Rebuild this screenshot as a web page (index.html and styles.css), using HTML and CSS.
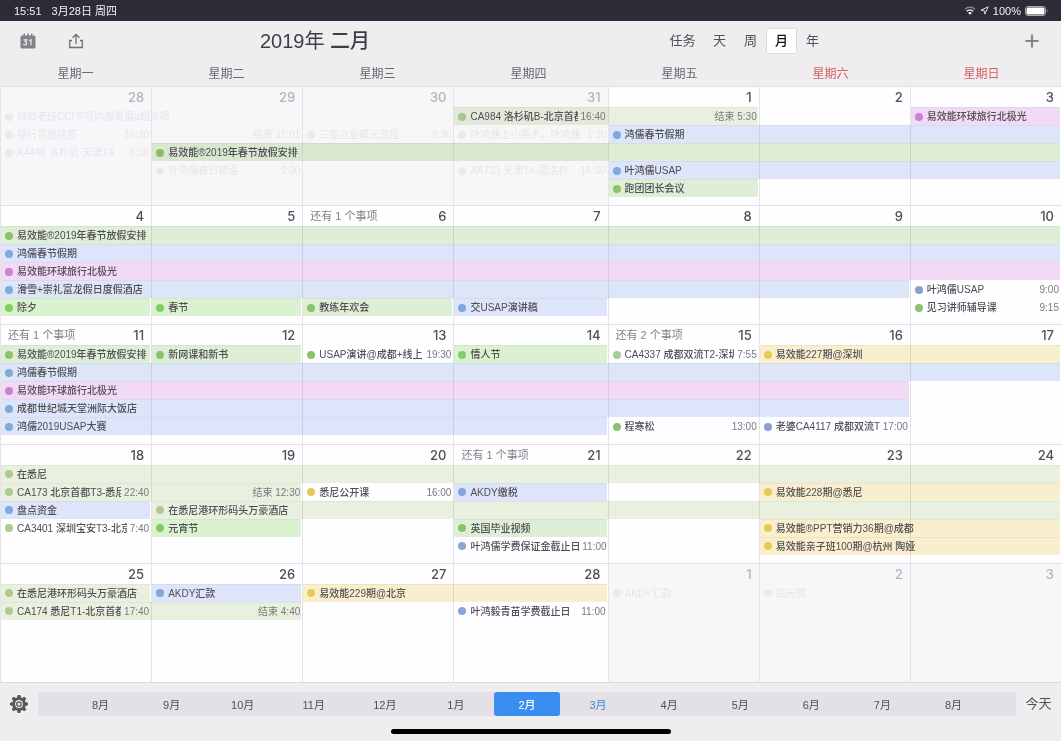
FILE: index.html
```html
<!DOCTYPE html>
<html lang="zh-CN">
<head>
<meta charset="utf-8">
<title>2019年 二月</title>
<meta name="viewport" content="width=device-width, initial-scale=1">
<link rel="stylesheet" href="styles.css">
</head>
<body>
<div class="status">
  <span class="clock">15:51</span>
  <span class="today">3月28日 周四</span>
  <span class="indicators">
    <svg width="12" height="9" viewBox="0 0 12 9" aria-hidden="true"><path d="M1 3.200a7.200 7.200 0 0 1 10 0" fill="none" stroke="#8d8c96" stroke-width="1.300"/><path d="M2.800 5.200a4.600 4.600 0 0 1 6.400 0" fill="none" stroke="#fff" stroke-width="1.500"/><path d="M6 8.800 4.100 6.800a2.800 2.800 0 0 1 3.800 0z" fill="#fff"/></svg>
    <svg width="9" height="9" viewBox="0 0 9 9" aria-hidden="true"><path d="M8.200.8.900 4.200l3.400.5.500 3.400z" fill="none" stroke="#d9d9dd" stroke-width="1"/></svg>
    <span>100%</span>
    <svg width="23" height="10" viewBox="0 0 23 10" aria-hidden="true"><rect x=".5" y=".5" width="20" height="9" rx="2.500" fill="none" stroke="#a9a8b0"/><rect x="1.500" y="1.500" width="18" height="7" rx="1.500" fill="#fff"/><path d="M21.800 3.500c1 .3 1 2.700 0 3z" fill="#a9a8b0"/></svg>
  </span>
</div>
<header class="toolbar">
  <div class="tools">
    <button class="icon" aria-label="日历"><svg width="16" height="16" viewBox="0 0 16 16"><path d="M2 2.500h1.500V.5h1.500v2h2.200V.5h1.600v2H11V.5h1.500v2H14q1.500 0 1.500 1.500v10q0 1.500-1.500 1.500H2Q.5 15.500.5 14V4Q.5 2.500 2 2.500z" fill="#838286"/><path d="M3.800 6.800h2.900L5.200 8.700c2.400.2 2 3.400-.2 3.200-.8 0-1.300-.4-1.500-.9M9.300 7.700l1.700-1v5.500" fill="none" stroke="#f1eff2" stroke-width="1.200"/></svg></button>
    <button class="icon" aria-label="分享"><svg width="16" height="16" viewBox="0 0 16 16"><path d="M4 7.500H1.700v7h12.600v-7H12M8 11V1.500M4.500 4.800 8 1.300 11.500 4.800" fill="none" stroke="#6f6e72" stroke-width="1.300"/></svg></button>
  </div>
  <h1 class="title">2019年 <b>二月</b></h1>
  <nav class="views">
    <button class="view wide">任务</button>
    <button class="view">天</button>
    <button class="view">周</button>
    <button class="view current" aria-pressed="true">月</button>
    <button class="view">年</button>
  </nav>
  <button class="icon add" aria-label="新建"><svg width="14" height="14" viewBox="0 0 14 14"><path d="M7 .5v13M.5 7h13" stroke="#858488" stroke-width="2.200"/></svg></button>
</header>
<div class="weekdays">
  <span>星期一</span><span>星期二</span><span>星期三</span><span>星期四</span><span>星期五</span><span class="rest">星期六</span><span class="rest">星期日</span>
</div>
<main class="month">
  <section class="week">
    <div class="day c1 out"><b>28</b></div>
    <div class="day c2 out"><b>29</b></div>
    <div class="day c3 out"><b>30</b></div>
    <div class="day c4 out"><b>31</b></div>
    <div class="day c5"><b>1</b></div>
    <div class="day c6"><b>2</b></div>
    <div class="day c7"><b>3</b></div>
    <div class="event ghost c1 s2 r1"><i></i><span>城西老班CCI专项内部发展a题多项</span></div>
    <div class="event ghost c1 r2"><i></i><span>银行贷面续签</span><time>16:30</time></div>
    <div class="event ghost c1 r3"><i></i><span>A4446 洛杉矶-天津T4</span><time>5:30</time></div>
    <div class="event ghost c2 r2"><time>结束 11:01</time></div>
    <div class="event ghost c2 r4"><i></i><span>叶鸿儒春日德语</span><time>9:00</time></div>
    <div class="event ghost c3 r2"><i></i><span>三亚立业模元流程</span><time>9:30</time></div>
    <div class="event ghost tight c4 r2"><i></i><span>叶鸿儒上小美术，叶鸿儒</span><time>1:30</time></div>
    <div class="event ghost c4 r4"><i></i><span>AA733 天津T4-国洛杉</span><time>16:30</time></div>
    <div class="event olive on c4 r1"><i></i><span>CA984 洛杉矶B-北京首都</span><time>16:40</time></div>
    <div class="event olive end c5 r1"><time>结束 5:30</time></div>
    <div class="event violet c7 r1"><i></i><span>易效能环球旅行北极光</span></div>
    <div class="event blue c5 s3 r2"><i></i><span>鸿儒春节假期</span></div>
    <div class="event green c2 s6 r3"><i></i><span>易效能®2019年春节放假安排</span></div>
    <div class="event blue c5 s3 r4"><i></i><span>叶鸿儒USAP</span></div>
    <div class="event green c5 r5"><i></i><span>跑团团长会议</span></div>
  </section>
  <section class="week">
    <div class="day c1"><b>4</b></div>
    <div class="day c2"><b>5</b></div>
    <div class="day c3"><a href="#more-6">还有 1 个事项</a><b>6</b></div>
    <div class="day c4"><b>7</b></div>
    <div class="day c5"><b>8</b></div>
    <div class="day c6"><b>9</b></div>
    <div class="day c7"><b>10</b></div>
    <div class="event green c1 s7 r1"><i></i><span>易效能®2019年春节放假安排</span></div>
    <div class="event blue c1 s7 r2"><i></i><span>鸿儒春节假期</span></div>
    <div class="event violet c1 s7 r3"><i></i><span>易效能环球旅行北极光</span></div>
    <div class="event sky c1 s6 r4"><i></i><span>滑雪+崇礼富龙假日度假酒店</span></div>
    <div class="event plain indigo c7 r4"><i></i><span>叶鸿儒USAP</span><time>9:00</time></div>
    <div class="event lime c1 r5"><i></i><span>除夕</span></div>
    <div class="event lime c2 r5"><i></i><span>春节</span></div>
    <div class="event green c3 r5"><i></i><span>教练年欢会</span></div>
    <div class="event blue c4 r5"><i></i><span>交USAP演讲稿</span></div>
    <div class="event plain green c7 r5"><i></i><span>见习讲师辅导课</span><time>9:15</time></div>
  </section>
  <section class="week">
    <div class="day c1"><a href="#more-11">还有 1 个事项</a><b>11</b></div>
    <div class="day c2"><b>12</b></div>
    <div class="day c3"><b>13</b></div>
    <div class="day c4"><b>14</b></div>
    <div class="day c5"><a href="#more-15">还有 2 个事项</a><b>15</b></div>
    <div class="day c6"><b>16</b></div>
    <div class="day c7"><b>17</b></div>
    <div class="event green c1 r1"><i></i><span>易效能®2019年春节放假安排</span></div>
    <div class="event green c2 r1"><i></i><span>新网课和新书</span></div>
    <div class="event plain green c3 r1"><i></i><span>USAP演讲@成都+线上直</span><time>19:30</time></div>
    <div class="event lime c4 r1"><i></i><span>情人节</span></div>
    <div class="event plain olive c5 r1"><i></i><span>CA4337 成都双流T2-深圳</span><time>7:55</time></div>
    <div class="event yellow c6 s2 r1"><i></i><span>易效能227期@深圳</span></div>
    <div class="event sky c1 s7 r2"><i></i><span>鸿儒春节假期</span></div>
    <div class="event violet c1 s6 r3"><i></i><span>易效能环球旅行北极光</span></div>
    <div class="event blue c1 s6 r4"><i></i><span>成都世纪城天堂洲际大饭店</span></div>
    <div class="event blue c1 s4 r5"><i></i><span>鸿儒2019USAP大赛</span></div>
    <div class="event plain green c5 r5"><i></i><span>程寒松</span><time>13:00</time></div>
    <div class="event plain indigo c6 r5"><i></i><span>老婆CA4117 成都双流T</span><time>17:00</time></div>
  </section>
  <section class="week">
    <div class="day c1"><b>18</b></div>
    <div class="day c2"><b>19</b></div>
    <div class="day c3"><b>20</b></div>
    <div class="day c4"><a href="#more-21">还有 1 个事项</a><b>21</b></div>
    <div class="day c5"><b>22</b></div>
    <div class="day c6"><b>23</b></div>
    <div class="day c7"><b>24</b></div>
    <div class="event olive c1 s7 r1"><i></i><span>在悉尼</span></div>
    <div class="event olive on c1 r2"><i></i><span>CA173 北京首都T3-悉尼</span><time>22:40</time></div>
    <div class="event olive end c2 r2"><time>结束 12:30</time></div>
    <div class="event plain yellow c3 r2"><i></i><span>悉尼公开课</span><time>16:00</time></div>
    <div class="event blue c4 r2"><i></i><span>AKDY缴税</span></div>
    <div class="event yellow c6 s2 r2"><i></i><span>易效能228期@悉尼</span></div>
    <div class="event blue c1 r3"><i></i><span>盘点资金</span></div>
    <div class="event olive c2 s6 r3"><i></i><span>在悉尼港环形码头万豪酒店</span></div>
    <div class="event plain olive c1 r4"><i></i><span>CA3401 深圳宝安T3-北京</span><time>7:40</time></div>
    <div class="event lime c2 r4"><i></i><span>元宵节</span></div>
    <div class="event green c4 r4"><i></i><span>英国毕业视频</span></div>
    <div class="event yellow c6 s2 r4"><i></i><span>易效能®PPT营销力36期@成都</span></div>
    <div class="event plain sky tight c4 r5"><i></i><span>叶鸿儒学费保证金截止日</span><time>11:00</time></div>
    <div class="event yellow c6 s2 r5"><i></i><span>易效能亲子班100期@杭州 陶娅</span></div>
  </section>
  <section class="week">
    <div class="day c1"><b>25</b></div>
    <div class="day c2"><b>26</b></div>
    <div class="day c3"><b>27</b></div>
    <div class="day c4"><b>28</b></div>
    <div class="day c5 out"><b>1</b></div>
    <div class="day c6 out"><b>2</b></div>
    <div class="day c7 out"><b>3</b></div>
    <div class="event olive c1 r1"><i></i><span>在悉尼港环形码头万豪酒店</span></div>
    <div class="event blue c2 r1"><i></i><span>AKDY汇款</span></div>
    <div class="event yellow c3 s2 r1"><i></i><span>易效能229期@北京</span></div>
    <div class="event ghost c5 r1"><i></i><span>AKDY汇款</span></div>
    <div class="event ghost c6 r1"><i></i><span>蒜元德</span></div>
    <div class="event olive on c1 r2"><i></i><span>CA174 悉尼T1-北京首都</span><time>17:40</time></div>
    <div class="event olive end c2 r2"><time>结束 4:40</time></div>
    <div class="event plain sky c4 r2"><i></i><span>叶鸿毅青苗学费截止日</span><time>11:00</time></div>
  </section>
</main>
<footer class="bottom">
  <div class="scrubber">
    <button class="icon" aria-label="设置"><svg width="20" height="20" viewBox="0 0 20 20"><g fill="#59585c"><path id="tooth" d="M8.700 1h2.600l1.200 4h-5zM8.700 19h2.600l1.200-4h-5z"/><use href="#tooth" transform="rotate(45 10 10)"/><use href="#tooth" transform="rotate(90 10 10)"/><use href="#tooth" transform="rotate(135 10 10)"/></g><circle cx="10" cy="10" r="5.300" fill="#efedf0" stroke="#59585c" stroke-width="2.800"/><circle cx="10" cy="10" r="2.200" fill="none" stroke="#59585c" stroke-width="1.300"/></svg></button>
    <nav class="months">
      <button>8月</button><button>9月</button><button>10月</button><button>11月</button><button>12月</button><button>1月</button><button class="selected" aria-pressed="true">2月</button><button class="now">3月</button><button>4月</button><button>5月</button><button>6月</button><button>7月</button><button>8月</button>
    </nav>
    <button class="goto">今天</button>
  </div>
  <div class="home"></div>
</footer>
</body>
</html>
```

FILE: styles.css
```css
* {
  box-sizing: border-box;
}

body {
  margin: 0;
  min-height: 100vh;
  display: flex;
  flex-direction: column;
  background: #efedf0;
  color: #504f54;
  font-family: "Liberation Sans", "Noto Sans CJK SC", sans-serif;
  font-size: 10px;
}

button {
  border: 0;
  padding: 0;
  background: none;
  color: inherit;
  font: inherit;
}

svg {
  display: block;
}

/* Status bar */
.status {
  height: 21px;
  padding: 0 13px 0 14px;
  display: flex;
  align-items: center;
  gap: 10px;
  background: #2c2b38;
  color: #f2f2f4;
  font-size: 11px;
  line-height: 14px;
}

.indicators {
  margin-left: auto;
  display: flex;
  align-items: center;
  gap: 4px;
}

/* Toolbar */
.toolbar {
  height: 39px;
  display: grid;
  grid-template-columns: 215fr 200fr 413fr 233fr;
  align-items: center;
}

.tools {
  padding-left: 20px;
  display: flex;
  gap: 32px;
}

.title {
  margin: 0;
  text-align: center;
  font-size: 20px;
  font-weight: 400;
  line-height: 24px;
  color: #3f3e42;
}

.title b {
  font-weight: 500;
}

.views {
  display: flex;
  justify-content: flex-end;
}

.view {
  width: 31px;
  height: 26px;
  padding-bottom: 3px;
  font-size: 13px;
}

.view.wide {
  width: 43px;
}

.view.current {
  background: #fff;
  border: 1px solid #dddbdf;
  border-radius: 2px;
  color: #111;
  font-weight: 500;
}

.add {
  justify-self: end;
  margin-right: 22px;
}

.weekdays {
  height: 26px;
  padding: 0 4px 1px 0;
  display: grid;
  grid-template-columns: repeat(7, 1fr);
  align-items: center;
  text-align: center;
  font-size: 12px;
  color: #6a696e;
}

.rest {
  color: #d2605f;
}

/* Month grid */
.month {
  flex: 1;
  display: grid;
  grid-template-rows: repeat(5, 1fr);
  background: #fefdff;
  border-bottom: 1px solid #dcdadf;
}

.week {
  display: grid;
  grid-template-columns: 151fr 151fr 151fr 154fr 151fr 151fr 151fr;
  grid-template-rows: 20px repeat(5, 17px) 1fr;
  row-gap: 1px;
}

.day {
  grid-row: 1 / -1;
  min-width: 0;
  padding: 0 7px;
  display: flex;
  border-top: 1px solid #e1dfe4;
  border-left: 1px solid #e6e4e9;
  line-height: 20px;
}

.day a {
  color: #807f84;
  font-size: 11px;
  text-decoration: none;
}

.day b {
  margin-left: auto;
  font-family: Inter, sans-serif;
  font-size: 13px;
  font-weight: 500;
}

.out {
  background: #f8f6f9;
}

.out b {
  color: #b5b4b9;
}

.c1 { grid-column: 1; }
.c2 { grid-column: 2; }
.c3 { grid-column: 3; }
.c4 { grid-column: 4; }
.c5 { grid-column: 5; }
.c6 { grid-column: 6; }
.c7 { grid-column: 7; }
.s2 { grid-column-end: span 2; }
.s3 { grid-column-end: span 3; }
.s4 { grid-column-end: span 4; }
.s6 { grid-column-end: span 6; }
.s7 { grid-column-end: span 7; }
.r1 { grid-row: 2; }
.r2 { grid-row: 3; }
.r3 { grid-row: 4; }
.r4 { grid-row: 5; }
.r5 { grid-row: 6; }

/* Events: each bar covers the row gap below it and draws its own top edge */
.event {
  --dot: #8cc46c;
  --fill: #e0f0d6;
  --edge: #d5e5cc;
  min-width: 0;
  margin: 0 1px -1px;
  padding: 0 0 0 4px;
  display: flex;
  align-items: center;
  background: var(--fill);
  border-top: 1px solid var(--edge);
  mix-blend-mode: multiply;
  font-weight: 500;
  line-height: 17px;
  white-space: nowrap;
}

.event i {
  flex: none;
  width: 8px;
  height: 8px;
  margin-right: 4px;
  border-radius: 50%;
  background: var(--dot);
}

.event span {
  min-width: 0;
  overflow: hidden;
}

.event time {
  margin-left: auto;
  padding: 0 1px 0 3px;
  color: #7b7b7e;
  font-weight: 400;
}

.tight time {
  padding: 0 0 0 1px;
}

.on {
  margin-right: 0;
  padding-right: 1px;
}

.end {
  margin-left: 0;
}

.olive { --dot: #adcd8e; --fill: #eaf2df; --edge: #dfe8d5; }
.lime { --dot: #7fd264; --fill: #dbf4cf; --edge: #d2e9c8; }
.blue { --dot: #7fa9dc; --fill: #dfe7fa; --edge: #d5def0; }
.sky { --dot: #83acd3; --fill: #dee8f8; --edge: #d4deee; }
.indigo { --dot: #8e9fd6; }
.violet { --dot: #cb82d6; --fill: #f3dcf7; --edge: #ead4ed; }
.yellow { --dot: #eacb55; --fill: #faf1cf; --edge: #eee5c3; }

.plain,
.ghost {
  background: none;
  border-color: transparent;
}

.ghost {
  --dot: #f3f1f4;
  color: #efedf1;
  font-weight: 400;
}

.ghost time {
  color: inherit;
}

/* Bottom bar */
.bottom {
  padding: 9px 0 7px;
}

.scrubber {
  padding: 0 9px;
  display: flex;
  align-items: center;
  gap: 9px;
}

.months {
  flex: 1;
  height: 24px;
  padding: 0 27px;
  display: grid;
  grid-template-columns: repeat(13, 1fr);
  background: #e3e1e5;
  border-radius: 3px;
}

.months button {
  padding-bottom: 1px;
  font-size: 11px;
}

.months .selected {
  margin: 0 3px;
  background: #3a8ef0;
  border-radius: 3px;
  color: #fff;
  font-weight: 500;
}

.months .now {
  color: #3a86dc;
}

.goto {
  width: 27px;
  padding-bottom: 3px;
  font-size: 13px;
  white-space: nowrap;
}

.home {
  width: 280px;
  height: 5px;
  margin: 13px auto 0;
  border-radius: 3px;
  background: #000;
}
```
